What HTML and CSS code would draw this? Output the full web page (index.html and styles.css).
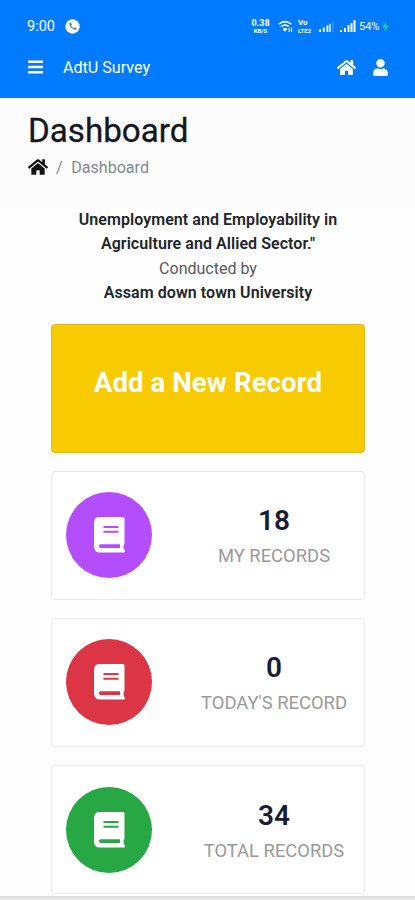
FILE: index.html
```html
<!DOCTYPE html>
<html lang="en">
<head>
  <meta charset="UTF-8">
  <meta name="viewport" content="width=device-width, initial-scale=1">
  <title>AdtU Survey</title>
  <link rel="stylesheet" href="styles.css">
</head>
<body>
  <!-- shared icons -->
  <svg class="sprite" width="0" height="0">
    <symbol id="home" viewBox="0 0 576 512">
      <path d="M280.37 148.26L96 300.11V464a16 16 0 0 0 16 16l112.06-.29a16 16 0 0 0 15.92-16V368a16 16 0 0 1 16-16h64a16 16 0 0 1 16 16v95.64a16 16 0 0 0 16 16.05L464 480a16 16 0 0 0 16-16V300L295.67 148.26a12.19 12.19 0 0 0-15.3 0zM571.6 251.47L488 182.56V44.05a12 12 0 0 0-12-12h-56a12 12 0 0 0-12 12v72.61L318.47 43a48 48 0 0 0-61 0L4.34 251.47a12 12 0 0 0-1.6 16.9l25.5 31A12 12 0 0 0 45.15 301l235.22-193.74a12.19 12.19 0 0 1 15.3 0L530.9 301a12 12 0 0 0 16.9-1.6l25.5-31a12 12 0 0 0-1.7-16.93z"/>
    </symbol>
    <symbol id="book" viewBox="0 0 31 36">
      <path fill-rule="evenodd" d="M5.500 0H29q1.500 0 1.500 1.500V26q0 1.200-.6 1.800-.8 2.200 0 4.200 1.100.9 1.100 2v.3q0 1.300-1.300 1.300H6Q0 35.600 0 29.800V5.500Q0 0 5.500 0zM9.500 9v2h15V9zM9.500 13.700v2h15v-2zM6.500 27.200q-1.500 0-1.500 1.900T6.500 31H26v-3.800z"/>
    </symbol>
  </svg>

  <header class="header">
    <div class="statusbar">
      <span class="time">9:00</span>
      <svg class="call" viewBox="0 0 15 15">
        <circle cx="7.500" cy="7.500" r="7.200" fill="#fff"/>
        <path d="M4.600 3.600c-1 1 .2 3.600 1.700 5.100s4.100 2.800 5.200 1.800l.4-.9-1.900-1.300-1.200.8c-1-.4-2-1.500-2.500-2.600l.8-1.100-1.300-2z" fill="#5d86b5"/>
      </svg>
      <div class="status-right">
        <div class="stack speed"><span>0.38</span><small>KB/S</small></div>
        <svg class="wifi" viewBox="0 0 15 13" fill="none" stroke="#fff" stroke-width="1.500">
          <path d="M.7 4.300Q7 -1 13.300 4.300M2.900 6.800Q7 3.300 11 6.800"/>
          <path d="M4.600 9Q7 7 9.400 9L7 11.800z" fill="#fff" stroke="none"/>
          <path d="M11.200 12V8M13.500 7.500v4.500" stroke-width="1.100"/>
        </svg>
        <div class="stack volte"><span>Vo</span><small>LTE2</small></div>
        <svg class="signal" viewBox="0 0 16 12" fill="#fff">
          <path d="M0 9h2v3H0zM4 7h2v5H4zM8 5h2v7H8z"/><path d="M11 3h1.500v9H11z"/><path d="M14.500 0h1v12h-1z" opacity=".3"/>
        </svg>
        <svg class="signal strong" viewBox="0 0 16 12" fill="#fff">
          <path d="M0 10h2v2H0zM4 8h2v4H4zM7.500 5h2v7h-2zM10.500 3h2v9h-2zM13.500 0h2v12h-2z"/>
        </svg>
        <span class="battery">54%</span>
        <svg class="bolt" viewBox="0 0 8 12"><path d="M5 0L0 7h3L2.500 12 8 5H4.800z" fill="#22c9a4"/></svg>
      </div>
    </div>
    <nav class="navbar">
      <svg class="menu" viewBox="0 0 15 14" fill="#fff"><path d="M0 .5h15v2.600H0zM0 5.700h15v2.600H0zM0 10.900h15v2.600H0z"/></svg>
      <span class="brand">AdtU Survey</span>
      <svg class="nav-home"><use href="#home"/></svg>
      <svg class="nav-user" viewBox="0 0 448 512"><path d="M224 256c70.700 0 128-57.300 128-128S294.700 0 224 0 96 57.300 96 128s57.300 128 128 128zm89.600 32h-16.700c-22.200 10.200-46.900 16-72.900 16s-50.600-5.800-72.900-16h-16.700C60.200 288 0 348.200 0 422.400V464c0 26.500 21.500 48 48 48h352c26.500 0 48-21.500 48-48v-41.600c0-74.200-60.200-134.400-134.400-134.400z"/></svg>
    </nav>
  </header>

  <section class="page-title">
    <h1>Dashboard</h1>
    <div class="breadcrumb">
      <svg><use href="#home"/></svg>
      <span class="slash">/</span>
      <span>Dashboard</span>
    </div>
  </section>

  <main class="content">
    <div class="intro">
      <b>Unemployment and Employability in</b>
      <b>Agriculture and Allied Sector."</b>
      <span>Conducted by</span>
      <b>Assam down town University</b>
    </div>

    <a class="card add">Add a New Record</a>

    <div class="card">
      <div class="circle purple"><svg><use href="#book"/></svg></div>
      <div class="info"><strong>18</strong><span>MY RECORDS</span></div>
    </div>
    <div class="card">
      <div class="circle red"><svg><use href="#book"/></svg></div>
      <div class="info"><strong>0</strong><span>TODAY'S RECORD</span></div>
    </div>
    <div class="card">
      <div class="circle green"><svg><use href="#book"/></svg></div>
      <div class="info"><strong>34</strong><span>TOTAL RECORDS</span></div>
    </div>
  </main>
  <footer class="bottom"></footer>
</body>
</html>
```
FILE: styles.css
```css
* { box-sizing: border-box; }
body {
  margin: 0;
  height: 900px;
  display: flex;
  flex-direction: column;
  overflow: hidden;
  background: #fefefe;
  font-family: Roboto, sans-serif;
  color: #212529;
}
svg { display: block; flex: none; }
.sprite { position: absolute; }

.header {
  flex: none;
  height: 98px;
  background: #007aff;
  color: #fff;
}
.statusbar {
  display: flex;
  align-items: center;
  height: 36px;
  padding: 16px 26px 0 27px;
}
.time { width: 38px; font-size: 14.5px; }
.call { width: 15px; height: 15px; }
.status-right {
  display: flex;
  align-items: center;
  margin-left: auto;
}
.stack {
  display: grid;
  grid-template-rows: 8px 7px;
  font-weight: 700;
}
.stack span { font-size: 8px; line-height: 8px; }
.stack small { font-size: 6px; line-height: 7px; }
.speed { width: 19px; margin-right: 8px; justify-items: center; }
.speed span { font-size: 9px; }
.volte { width: 15px; margin-right: 6px; }
.wifi { width: 15px; height: 13px; margin-right: 5px; }
.signal { width: 15px; height: 11px; margin-right: 6px; }
.strong { width: 16px; height: 12px; margin-right: 3px; }
.battery { width: 23px; font-size: 11px; }
.bolt { width: 7px; height: 11px; }

.navbar {
  display: flex;
  align-items: center;
  height: 62px;
  padding: 0 27px 0 28px;
  fill: #fff;
}
.menu { width: 15px; height: 14px; }
.brand { margin-left: 20px; font-size: 16.1px; }
.nav-home { width: 19px; height: 17px; margin-left: auto; }
.nav-user { width: 15px; height: 17px; margin-left: 17px; }

.page-title {
  flex: none;
  height: 110px;
  padding: 12px 28px 0;
  background: #fcfcfd;
}
h1 {
  margin: 0;
  font-size: 33.2px;
  font-weight: 400;
  line-height: 42px;
  color: #15171c;
  -webkit-text-stroke: 0.3px #15171c;
}
.breadcrumb {
  display: flex;
  align-items: center;
  margin-top: 5px;
  height: 20px;
  font-size: 16.1px;
  color: #858a8f;
}
.breadcrumb svg { width: 20px; height: 18px; fill: #111; }
.slash { margin: 0 8.5px 0 8px; }

.content {
  flex: none;
  padding: 0 50px 0 51px;
}
.intro {
  display: flex;
  flex-direction: column;
  align-items: center;
  height: 115.5px;
  font-size: 16px;
  line-height: 24.3px;
  white-space: nowrap;
}
.intro b { font-weight: 600; letter-spacing: 0.06px; }
.intro span { color: #55595d; }

.card {
  display: flex;
  align-items: center;
  height: 129px;
  margin-bottom: 18.2px;
  padding-left: 14px;
  border: 1px solid #e8e8e8;
  border-radius: 4px;
  background: #fff;
}
.card:last-child { margin-bottom: 0; }
.add {
  justify-content: center;
  padding: 0 0 11px;
  border-color: #dcb915;
  background: #f8cb00;
  color: #fff;
  font-size: 27.7px;
  font-weight: 700;
}
.circle {
  display: flex;
  justify-content: center;
  align-items: center;
  width: 86px;
  height: 86px;
  border-radius: 50%;
}
.circle svg { width: 31px; height: 36px; fill: #fff; }
.purple { background: #b44dfc; }
.red { background: #dc3545; }
.green { background: #28a745; }
.info {
  flex: 1;
  display: flex;
  flex-direction: column;
  align-items: center;
  padding: 6px 0 0 32px;
  white-space: nowrap;
}
.info strong {
  font-size: 28px;
  font-weight: 600;
  line-height: 36px;
  color: #181c35;
}
.info span {
  font-size: 18.4px;
  line-height: 34px;
  color: #999;
}

.bottom {
  flex: none;
  height: 4px;
  margin-top: auto;
  border-bottom: 1px solid #eee;
  background: #e1e1e1;
}
```
